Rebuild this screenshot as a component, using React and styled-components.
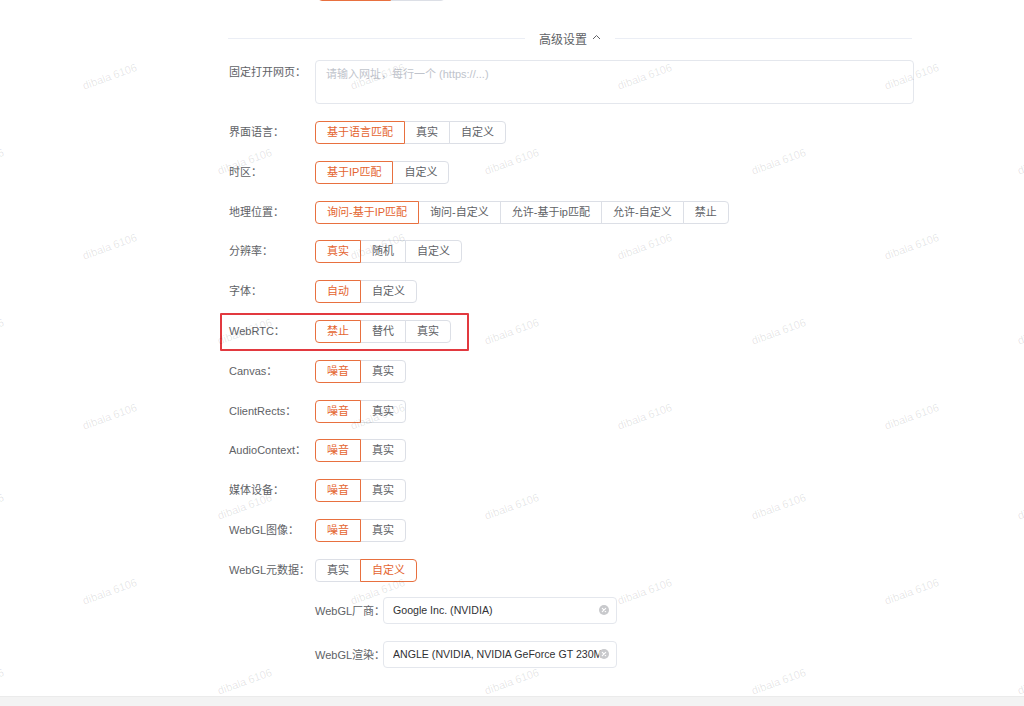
import React from 'react';
import styled, { createGlobalStyle } from 'styled-components';

const GlobalStyle = createGlobalStyle`
  html, body {
    margin: 0;
    padding: 0;
    background: #fff;
    overflow: hidden;
  }
  body {
    font-family: 'Liberation Sans', 'Noto Sans CJK SC', sans-serif;
    -webkit-font-smoothing: antialiased;
  }
`;

const ORANGE = '#e8703f';
const BORDER = '#dcdfe6';
const TEXT = '#606266';

const rows = [
  { label: '界面语言：', options: ['基于语言匹配', '真实', '自定义'], active: 0 },
  { label: '时区：', options: ['基于IP匹配', '自定义'], active: 0 },
  {
    label: '地理位置：',
    options: ['询问-基于IP匹配', '询问-自定义', '允许-基于ip匹配', '允许-自定义', '禁止'],
    active: 0,
  },
  { label: '分辨率：', options: ['真实', '随机', '自定义'], active: 0 },
  { label: '字体：', options: ['自动', '自定义'], active: 0 },
  { label: 'WebRTC：', options: ['禁止', '替代', '真实'], active: 0, marked: true },
  { label: 'Canvas：', options: ['噪音', '真实'], active: 0 },
  { label: 'ClientRects：', options: ['噪音', '真实'], active: 0 },
  { label: 'AudioContext：', options: ['噪音', '真实'], active: 0 },
  { label: '媒体设备：', options: ['噪音', '真实'], active: 0 },
  { label: 'WebGL图像：', options: ['噪音', '真实'], active: 0 },
  { label: 'WebGL元数据：', options: ['真实', '自定义'], active: 1 },
];

const webglFields = [
  { label: 'WebGL厂商：', value: 'Google Inc. (NVIDIA)' },
  { label: 'WebGL渲染：', value: 'ANGLE (NVIDIA, NVIDIA GeForce GT 230M Direct3D11 vs_5_0 ps_5_0)' },
];

// 水印位置 (交错排列)
const marks = [];
[-10, 165, 335, 510, 685].forEach((y) => {
  [-50, 218, 485, 752, 1018].forEach((x) => marks.push({ x, y }));
});
[80, 250, 420, 595].forEach((y) => {
  [83, 351, 618, 885].forEach((x) => marks.push({ x, y }));
});

function ClearIcon() {
  return (
    <ClearWrap>
      <svg width="10" height="10" viewBox="0 0 10 10">
        <circle cx="5" cy="5" r="5" fill="#c8c9cc" />
        <path d="M3.3 3.3 L6.7 6.7 M6.7 3.3 L3.3 6.7" stroke="#fff" strokeWidth="1.1" strokeLinecap="round" />
      </svg>
    </ClearWrap>
  );
}

function SegmentGroup({ options, active }) {
  return (
    <Group>
      {options.map((opt, i) => (
        <Segment key={i} $active={i === active}>
          {opt}
        </Segment>
      ))}
    </Group>
  );
}

export default function App() {
  return (
    <>
      <GlobalStyle />
      <Page>
        <Scroller>
          <Content>
            {/* 上一个选项组，只露出底边 */}
            <TopRow>
              <Group>
                <Segment $active $width={73} />
                <Segment $width={55} />
              </Group>
            </TopRow>

            <Divider>
              <Line />
              <DividerTitle>
                高级设置
                <svg width="9" height="6" viewBox="0 0 9 6">
                  <path d="M1 5 L4.5 1.5 L8 5" fill="none" stroke={TEXT} strokeWidth="1" />
                </svg>
              </DividerTitle>
              <Line />
            </Divider>

            <TextareaRow>
              <Label>固定打开网页：</Label>
              <UrlBox placeholder="请输入网址，每行一个 (https://...)" />
            </TextareaRow>

            <Form>
              {rows.map((row) => (
                <Row key={row.label} $marked={row.marked}>
                  <Label>{row.label}</Label>
                  <SegmentGroup options={row.options} active={row.active} />
                </Row>
              ))}
            </Form>

            <SubForm>
              {webglFields.map((f) => (
                <SubRow key={f.label}>
                  <SubLabel>{f.label}</SubLabel>
                  <Input>
                    <InputText>{f.value}</InputText>
                    <ClearIcon />
                  </Input>
                </SubRow>
              ))}
            </SubForm>
          </Content>
        </Scroller>
        <Footer />
        <Watermarks>
          {marks.map((m, i) => (
            <Mark key={i} $x={m.x} $y={m.y}>
              dibala 6106
            </Mark>
          ))}
        </Watermarks>
      </Page>
    </>
  );
}

const Page = styled.div`
  position: relative;
  width: 1024px;
  height: 706px;
  display: flex;
  flex-direction: column;
  overflow: hidden;
  background: #fff;
`;

const Scroller = styled.div`
  flex: 1;
  overflow: hidden;
`;

const Content = styled.div`
  width: 686px;
  margin: -22px 0 0 228px;
`;

const Label = styled.div`
  width: 87px;
  flex-shrink: 0;
  padding-left: 1px;
  box-sizing: border-box;
  font-size: 11px;
  line-height: 23px;
  color: ${TEXT};
  white-space: nowrap;
`;

const TopRow = styled.div`
  display: flex;
  align-items: center;
  height: 23px;
  padding-left: 90px;
`;

const Divider = styled.div`
  display: flex;
  align-items: center;
  margin-top: 28px;
  height: 18px;
  width: 684px;
`;

const Line = styled.div`
  flex: 1;
  height: 1px;
  background: #ebeef5;
`;

const DividerTitle = styled.div`
  display: flex;
  align-items: center;
  gap: 5px;
  padding: 0 14px;
  font-size: 12px;
  color: ${TEXT};

  svg {
    margin-top: -2px;
  }
`;

const TextareaRow = styled.div`
  display: flex;
  align-items: flex-start;
  margin-top: 13px;

  ${Label} {
    line-height: 24px;
  }
`;

const UrlBox = styled.textarea`
  width: 599px;
  height: 44px;
  box-sizing: border-box;
  border: 1px solid #e4e7ed;
  border-radius: 4px;
  padding: 6px 10px;
  resize: none;
  outline: none;
  font-family: 'Liberation Sans', 'Noto Sans CJK SC', sans-serif;
  font-size: 11px;
  line-height: 15px;
  color: #303133;

  &::placeholder {
    color: #c0c4cc;
  }
`;

const Form = styled.div`
  display: flex;
  flex-direction: column;
  gap: 16.8px;
  margin-top: 17px;
`;

const Row = styled.div`
  position: relative;
  display: flex;
  align-items: center;
  height: 23px;

  ${(p) =>
    p.$marked &&
    `
    &::after {
      content: '';
      position: absolute;
      left: -8px;
      top: -7px;
      width: 249px;
      height: 38px;
      border: 2px solid #e2393f;
      box-sizing: border-box;
      border-radius: 1px;
    }
  `}
`;

const Group = styled.div`
  display: flex;
`;

const Segment = styled.div`
  position: relative;
  z-index: ${(p) => (p.$active ? 1 : 0)};
  height: 23px;
  ${(p) => p.$width && `width: ${p.$width}px;`}
  box-sizing: border-box;
  padding: 0 11px;
  margin-left: -1px;
  border: 1px solid ${(p) => (p.$active ? ORANGE : BORDER)};
  background: #fff;
  color: ${(p) => (p.$active ? '#e4642f' : TEXT)};
  font-size: 11px;
  line-height: 21px;
  white-space: nowrap;

  &:first-child {
    margin-left: 0;
    border-radius: 4px 0 0 4px;
  }
  &:last-child {
    border-radius: 0 4px 4px 0;
  }
`;

const SubForm = styled.div`
  display: flex;
  flex-direction: column;
  gap: 17px;
  margin-top: 15px;
  padding-left: 87px;
`;

const SubRow = styled.div`
  display: flex;
  align-items: center;
`;

const SubLabel = styled.div`
  width: 68px;
  flex-shrink: 0;
  font-size: 11px;
  color: ${TEXT};
  white-space: nowrap;
`;

const Input = styled.div`
  position: relative;
  display: flex;
  align-items: center;
  width: 234px;
  height: 27px;
  box-sizing: border-box;
  padding: 0 13px 0 9px;
  border: 1px solid #e4e7ed;
  border-radius: 4px;
`;

const InputText = styled.div`
  flex: 1;
  overflow: hidden;
  white-space: nowrap;
  font-size: 10.6px;
  color: #303133;
`;

const ClearWrap = styled.span`
  position: absolute;
  right: 7px;
  top: 50%;
  transform: translateY(-50%);
  display: flex;
  background: #fff;
  border-radius: 50%;
`;

const Footer = styled.div`
  height: 9px;
  flex-shrink: 0;
  background: #f3f3f3;
  border-top: 1px solid #ebebeb;
`;

const Watermarks = styled.div`
  position: absolute;
  inset: 0;
  pointer-events: none;
  z-index: 5;
`;

const Mark = styled.span.attrs((p) => ({
  style: { left: p.$x, top: p.$y },
}))`
  position: absolute;
  font-size: 11px;
  color: rgba(0, 0, 0, 0.11);
  white-space: nowrap;
  transform: rotate(-20deg);
  transform-origin: left center;
`;
